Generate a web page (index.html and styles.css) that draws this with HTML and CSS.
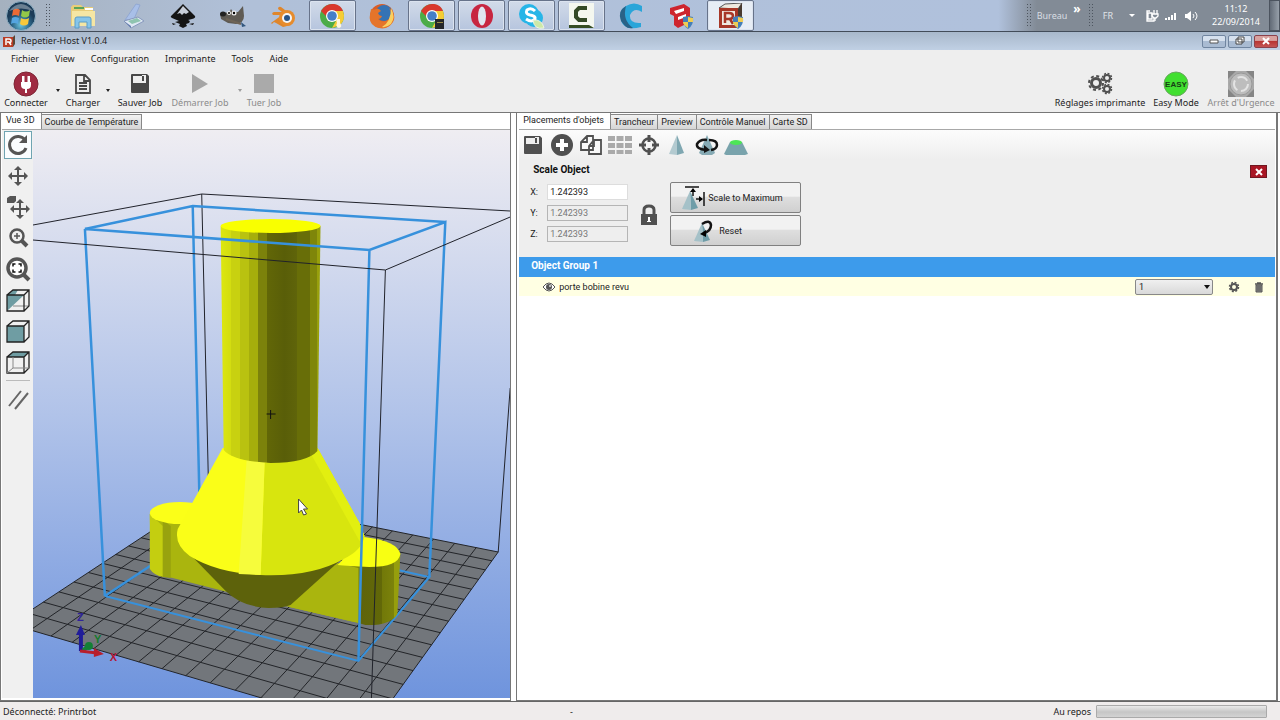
FILE: index.html
```html
<!DOCTYPE html>
<html lang="fr">
<head>
<meta charset="utf-8">
<title>Repetier-Host V1.0.4</title>
<link rel="stylesheet" href="styles.css">
</head>
<body>
<header class="taskbar">
  <button class="start" aria-label="Démarrer"><svg width="32" height="30" viewBox="0 0 32 30"><defs><radialGradient id="orb" cx=".5" cy=".8"><stop offset="0" stop-color="#6cc6e0"/><stop offset=".6" stop-color="#2d6688"/><stop offset="1" stop-color="#1c3c58"/></radialGradient></defs><circle cx="16" cy="15" r="14.500" fill="url(#orb)" stroke="#8fb0c4"/><path d="M8 9q4-2.500 7 0l-1 6q-4-2-7 0z" fill="#ea6a35"/><path d="M17 9q4 3 8 0l-1 6q-4 3-8 0z" fill="#93c848"/><path d="M7 17q3-2 7 0l-1 6q-4-2-7 0z" fill="#55a5e0"/><path d="M16 17q4 2.500 8 0l-1 6q-4 3-8 0z" fill="#f8c83a"/><path d="M4 10Q16-4 28 10 16 5 4 10" fill="#fff" opacity=".35"/></svg></button>
  <i class="grip"></i>
  <nav class="apps">
    <button class="app" aria-label="Explorateur"><svg viewBox="0 0 28 26"><path d="M2 4l2-2h8l2 2h10v19H2z" fill="#e8cd78"/><path d="M3 8h23v15H3z" fill="#f5e6a4"/><path d="M5 4h10v2H5z" fill="#5aa45c"/><path d="M16 5h8v2h-8z" fill="#fff"/><path d="M6 25V16q0-2 2-2h12q2 0 2 2v9h-4v-6h-8v6z" fill="#86c5ea" stroke="#5b9dc8"/></svg></button>
    <button class="app" aria-label="Scanner"><svg viewBox="0 0 28 26"><path d="M17 1l4 1-6 14-9 1z" fill="#a8bfe8" stroke="#92a8d2"/><path d="M5 18l14-4 6 4-13 7z" fill="#dfe8f4" stroke="#8799bd"/><path d="M9 18l9-3 4 3-9 3z" fill="#8fc4b0"/><path d="M5 18l7 7v-2l-7-5z" fill="#637bad"/></svg></button>
    <button class="app" aria-label="Inkscape"><svg viewBox="0 0 28 26"><path d="M14 1L26 13q1 2-3 3l-4 1q3 1 1 3l-3 1 1 2-4 2-4-2 1-2-5-2 4-1-7-3q-2-1-1-2z" fill="#151515"/><path d="M14 3l6 6-3 2-2-1-2 2-2-2-3 1z" fill="#c8ced8"/><path d="M20 21l5-1-1 2zM3 20l4 1-3 1z" fill="#151515"/></svg></button>
    <button class="app" aria-label="GIMP"><svg viewBox="0 0 28 26"><path d="M3 9l7 1 2-4 2 3h5l5-6 1 10q0 7-8 8l-8-1-7-4-1-5z" fill="#5f5b54"/><ellipse cx="4" cy="11" rx="3" ry="2.500" fill="#222"/><circle cx="10" cy="10" r="2" fill="#eee"/><circle cx="15" cy="10" r="2.500" fill="#eee"/><circle cx="10" cy="10" r="1"/><circle cx="15" cy="10" r="1.200"/><path d="M7 16l15 5" stroke="#6f6457" stroke-width="2"/><path d="M22 19l5 4-4 1z" fill="#32577f"/></svg></button>
    <button class="app" aria-label="Blender"><svg viewBox="0 0 28 26"><path d="M2 20l11-8H4q-2-2 1-3h8l-4-3q0-3 3-2l12 9-2 9-8 2-7-4-2-1-2 2z" fill="#df862b"/><circle cx="18" cy="15" r="8" fill="#e68c2d"/><circle cx="18" cy="15" r="5" fill="#f4f6f8"/><circle cx="18" cy="15" r="3" fill="#285486"/></svg></button>
    <button class="app open" aria-label="Chrome"><svg viewBox="0 0 28 26"><circle cx="14" cy="13" r="12" fill="#4cac48"/><path d="M3 8Q8 0 16 1q7 1 9 7H14L9 14z" fill="#d9382d"/><path d="M14 8h11q3 8-3 14l-8 3 5-9z" fill="#f6cc35"/><circle cx="14" cy="13" r="6" fill="#fff"/><circle cx="14" cy="13" r="4.800" fill="#467fc8"/><path d="M18 16h4v4q3 4-1 5-4-1-2-5z" fill="#fff7dc"/></svg></button>
    <button class="app" aria-label="Firefox"><svg viewBox="0 0 28 26"><circle cx="14" cy="13" r="12" fill="#d95d27"/><circle cx="16" cy="10" r="8" fill="#3473b5"/><path d="M3 6q3 1 5 0 3-1 5 2l-3 2q1 3 4 3-1 3-4 3 5 5 11 0 4-5 0-11 8 7 4 14-5 8-14 6Q0 22 2 12z" fill="#e5742a"/><path d="M23 5q5 9 0 16-5 4-9 3 9-5 9-19" fill="#fad060"/></svg></button>
    <button class="app open" aria-label="Chrome 2"><svg viewBox="0 0 28 26"><circle cx="14" cy="13" r="12" fill="#4cac48"/><path d="M3 8Q8 0 16 1q7 1 9 7H14L9 14z" fill="#d9382d"/><path d="M14 8h11q3 8-3 14l-8 3 5-9z" fill="#f6cc35"/><circle cx="14" cy="13" r="6" fill="#fff"/><circle cx="14" cy="13" r="4.800" fill="#467fc8"/><path d="M17 16h9v10h-9z" fill="#24272b"/><path d="M19 19h6v1h-6z" fill="#9b8b47"/></svg></button>
    <button class="app open" aria-label="Opera"><svg viewBox="0 0 28 26"><ellipse cx="14" cy="13" rx="11" ry="12" fill="#c72640"/><ellipse cx="14" cy="13" rx="4" ry="9.500" fill="#dfe6ef"/></svg></button>
    <button class="app open" aria-label="Skype"><svg viewBox="0 0 28 26"><circle cx="12" cy="11" r="10" fill="#27b5e7"/><circle cx="17" cy="15" r="9" fill="#27b5e7"/><path d="M18 8q-4-4-8-1-2 4 3 5 6 1 5 4-3 4-9 0" fill="none" stroke="#fff" stroke-width="3"/><path d="M16 17q9-1 11 8-10 2-11-8" fill="#cde9a8" stroke="#eef5e2"/></svg></button>
    <button class="app open" aria-label="Camtasia"><svg viewBox="0 0 28 26"><path d="M2 0h25v25H2z" fill="#f4f7ef"/><path d="M20 5h-8l-3 3v6l3 3h8" fill="none" stroke="#344a27" stroke-width="4"/><path d="M2 22h20l5 3H2z" fill="#354d22"/></svg></button>
    <button class="app" aria-label="Cura"><svg viewBox="0 0 28 26"><path d="M25 3v6q-8-5-12 3-1 9 11 8v4Q10 28 5 20 0 8 9 3q8-5 16 0" fill="#2aa5d9"/><path d="M9 3Q0 8 4 18l4 5q3 3 8 2Q5 17 9 3" fill="#2a6286"/></svg></button>
    <button class="app" aria-label="SketchUp"><svg viewBox="0 0 28 26"><path d="M3 5l14-4 6 4v14l-12 6-4-3V13L3 11z" fill="#ce252e"/><path d="M7 8l10-3v3L9 11zM11 14l8-3v3l-8 3z" fill="#fff"/><path d="M16 14l5-1 5 1q1 8-5 12-6-4-5-12" fill="#457fb8"/><path d="M21 14l5 1v4h-5v6q-5-3-5-6h5z" fill="#efcd54"/></svg></button>
    <button class="app open current" aria-label="Repetier-Host"><svg viewBox="0 0 28 26"><path d="M2 5l6-4 17-1-4 6z" fill="#eee9df" stroke="#555"/><path d="M2 5h19v20H2z" fill="#a73727"/><path d="M21 6l4-6v18l-4 7z" fill="#493b30"/><path d="M5 8h13v14H5z" fill="#efe9e0"/><path d="M8 20V10h4q4 0 4 3t-4 3H9m4 0l3 5" stroke="#a73727" stroke-width="2.500" fill="none"/><path d="M16 14l5-1 5 1q1 8-5 12-6-4-5-12" fill="#457fb8"/><path d="M21 14l5 1v4h-5v6q-5-3-5-6h5z" fill="#efcd54"/></svg></button>
  </nav>
  <div class="tray">
    <i class="grip"></i><span class="desk">Bureau</span><b class="chev">»</b><i class="grip"></i><span class="lang">FR</span><i class="down light"></i>
    <svg class="trayicons" width="54" height="14" viewBox="0 0 54 14"><g fill="none" stroke="#fff" stroke-width="1.300"><path d="M5 2H2v10h7V9M3 4h4v6H3z"/><path d="M9 1v4M12 1v4M7 5h6v2l-2 2H9L7 7zM10 9v3"/></g><path d="M20 11V9h2v2M23 11V8h2v3M26 11V6h2v5M29 11V4h2v7" fill="#fff"/><path d="M40 5h2l4-3v10l-4-3h-2z" fill="#fff"/><path d="M48 5q2 2 0 4M50 3q4 4 0 8" stroke="#fff" fill="none"/></svg>
    <time class="clock"><span>11:12</span><span>22/09/2014</span></time>
    <button class="showdesk" aria-label="Afficher le bureau"></button>
  </div>
</header>

<div class="titlebar">
  <svg width="14" height="12" viewBox="0 0 14 12"><path d="M1 2h10v10H1z" fill="#b93b25"/><path d="M11 2l2-2v9l-2 3z" fill="#5b4638"/><path d="M4 10V4h3q2 0 2 2T7 7H5m2 0l2 3" stroke="#fff" stroke-width="1.500" fill="none"/></svg>
  <h1>Repetier-Host V1.0.4</h1>
  <div class="winbtns">
    <button aria-label="Réduire"><svg width="12" height="8"><path d="M2 3h8v3H2z" fill="#fff" stroke="#555"/></svg></button>
    <button aria-label="Restaurer"><svg width="12" height="10"><path d="M4 1h6v5H4zM2 3h6v5H2z" fill="#fff" stroke="#444"/></svg></button>
    <button class="close" aria-label="Fermer"><svg width="12" height="8"><path d="M3 1l6 6M9 1L3 7" stroke="#fff" stroke-width="2"/></svg></button>
  </div>
</div>

<nav class="menubar"><button>Fichier</button><button>View</button><button>Configuration</button><button>Imprimante</button><button>Tools</button><button>Aide</button></nav>

<div class="toolbar">
  <button class="tool connect"><svg width="26" height="26" viewBox="0 0 26 26"><circle cx="13" cy="13" r="12" fill="#9f2b42" stroke="#7d2635"/><path d="M8 11h10v3q0 4-4 4v4h-2v-4q-4 0-4-4zM9 5h2.500v6H9zM14.500 5H17v6h-2.500z" fill="#fff"/></svg><span>Connecter</span></button>
  <button class="drop" aria-label="Options de connexion"><i class="down"></i></button>
  <button class="tool load"><svg width="20" height="26" viewBox="0 0 20 26"><path d="M3 4h9l5 5v13H3zM11 4v6h6M6 12h8M6 15h8M6 18h8" fill="none" stroke="#484848" stroke-width="1.800"/></svg><span>Charger</span></button>
  <button class="drop" aria-label="Options de chargement"><i class="down"></i></button>
  <button class="tool save"><svg width="22" height="26" viewBox="0 0 22 26"><path d="M2 4q0-1 1-1h15l2 2v16q0 1-1 1H3q-1 0-1-1z" fill="#484848"/><path d="M4 4h13v8H4z" fill="#eee"/><path d="M4 4h9v1H4zM13 5h2v5h-2z" fill="#484848"/></svg><span>Sauver Job</span></button>
  <button class="tool run" disabled><svg width="22" height="26" viewBox="0 0 22 26"><path d="M3 3l16 10L3 22z" fill="#a5a5a5"/></svg><span>Démarrer Job</span></button>
  <button class="drop" aria-label="Options de job" disabled><i class="down"></i></button>
  <button class="tool kill" disabled><svg width="22" height="26" viewBox="0 0 22 26"><path d="M1 3h20v19H1z" fill="#aaa"/></svg><span>Tuer Job</span></button>
  <button class="tool settings"><svg width="26" height="26" viewBox="0 0 26 26"><g fill="none" stroke="#505050"><circle cx="9" cy="12" r="4.500" stroke-width="3"/><circle cx="9" cy="12" r="7" stroke-width="2" stroke-dasharray="3 2.500"/><circle cx="20" cy="7" r="3" stroke-width="2"/><circle cx="20" cy="7" r="4.500" stroke-width="1.500" stroke-dasharray="2 1.530"/><circle cx="20" cy="18" r="3" stroke-width="2"/><circle cx="20" cy="18" r="4.500" stroke-width="1.500" stroke-dasharray="2 1.530"/></g></svg><span>Réglages imprimante</span></button>
  <button class="tool easy"><svg width="26" height="26" viewBox="0 0 26 26"><circle cx="13" cy="13" r="12" fill="#41df30" stroke="#6aa55f"/><text x="13" y="16" text-anchor="middle" class="easytext">EASY</text></svg><span>Easy Mode</span></button>
  <button class="tool stop" disabled><svg width="26" height="26" viewBox="0 0 26 26"><path d="M0 0h26v26H0z" fill="#aaa"/><path d="M0 0h8L0 8zM26 0v8l-8-8zM0 26v-8l8 8zM26 26h-8l8-8z" fill="#858585"/><circle cx="13" cy="13" r="11" fill="#bdbdbd" stroke="#999"/><circle cx="13" cy="13" r="7" fill="none" stroke="#e3e3e3" stroke-width="2" stroke-dasharray="11 3.660"/></svg><span>Arrêt d'Urgence</span></button>
</div>

<main class="work">
  <section class="left">
    <div class="tabs" role="tablist"><button class="tab active" role="tab">Vue 3D</button><button class="tab" role="tab">Courbe de Température</button></div>
    <div class="view">
      <div class="sidetools">
        <button class="side on" aria-label="Rotation"><svg viewBox="0 0 26 26"><path d="M20 8a8.500 8.500 0 1 0 1 8" fill="none" stroke="#555" stroke-width="3"/><path d="M22 3v8h-8z" fill="#555"/></svg></button>
        <button class="side" aria-label="Déplacer"><svg viewBox="0 0 26 26"><path d="M13 5v16M5 13h16" stroke="#555" stroke-width="2"/><path d="M13 3l4 4H9zM13 23l4-4H9zM3 13l4-4v8zM23 13l-4-4v8z" fill="#555"/></svg></button>
        <button class="side" aria-label="Déplacer l'objet"><svg viewBox="0 0 26 26"><path d="M2 4l3-2h6v5l-2 2H2z" fill="#555"/><path d="M15 8v14M7 15h16" stroke="#555" stroke-width="2"/><path d="M15 5l4 4h-8zM15 25l4-4h-8zM5 15l4-4v8zM25 15l-4-4v8z" fill="#555"/></svg></button>
        <button class="side" aria-label="Zoom"><svg viewBox="0 0 26 26"><circle cx="12" cy="11" r="6.500" fill="none" stroke="#555" stroke-width="2.500"/><path d="M17 16l5 5" stroke="#555" stroke-width="4"/><path d="M12 8v6M9 11h6" stroke="#555" stroke-width="1.500"/></svg></button>
        <button class="side" aria-label="Ajuster"><svg viewBox="0 0 26 26"><circle cx="12" cy="12" r="9" fill="#fff" stroke="#555" stroke-width="3.500"/><path d="M19 19l5 5" stroke="#555" stroke-width="4"/><path d="M8 10.500V8h2.500M13.500 8H16v2.500M16 13.500V16h-2.500M10.500 16H8v-2.500" fill="none" stroke="#111" stroke-width="1.500"/></svg></button>
        <button class="side" aria-label="Isométrique"><svg viewBox="0 0 26 26"><path d="M2 8h17L2 24z" fill="#6f9da3"/><path d="M8 3h5l-3 5H2z" fill="#6f9da3"/><path d="M8 19h16" stroke="#888"/><path d="M2 8h17v16H2zM2 8l6-5h16v16l-5 5M19 8l5-5" fill="none" stroke="#222" stroke-width="1.300"/></svg></button>
        <button class="side" aria-label="Vue de face"><svg viewBox="0 0 26 26"><path d="M2 8h17v16H2z" fill="#6f9da3"/><path d="M2 8h17v16H2zM2 8l6-5h16v16l-5 5M19 8l5-5" fill="none" stroke="#222" stroke-width="1.300"/></svg></button>
        <button class="side" aria-label="Vue de dessus"><svg viewBox="0 0 26 26"><path d="M2 8l6-5h16l-5 5z" fill="#6f9da3"/><path d="M2 8h17v16H2zM2 8l6-5h16v16l-5 5M19 8l5-5" fill="none" stroke="#222" stroke-width="1.300"/><path d="M8 8v11l-6 5M8 19h16" fill="none" stroke="#888"/></svg></button>
        <hr>
        <button class="side" aria-label="Projection parallèle"><svg viewBox="0 0 26 26"><path d="M4 20L16 5M10 23L23 7" stroke="#666" stroke-width="2"/></svg></button>
      </div>
      <svg class="scene" viewBox="33 130 478 568" preserveAspectRatio="none" role="img" aria-label="Porte bobine sur le plateau">
        <defs>
          <linearGradient id="sky" x1="0" y1="0" x2="0" y2="1"><stop offset="0" stop-color="#efedf2"/><stop offset=".5" stop-color="#b1c3e9"/><stop offset="1" stop-color="#6f94dd"/></linearGradient>
          <linearGradient id="tube" gradientUnits="userSpaceOnUse" x1="221" y1="0" x2="321" y2="0">
            <stop offset="0" stop-color="#dde710"/><stop offset=".1" stop-color="#d3dd10"/><stop offset=".1" stop-color="#c8d110"/><stop offset=".19" stop-color="#c8d110"/><stop offset=".19" stop-color="#b9c210"/><stop offset=".28" stop-color="#b9c210"/><stop offset=".28" stop-color="#a6ae0c"/><stop offset=".37" stop-color="#a6ae0c"/><stop offset=".37" stop-color="#7c820b"/><stop offset=".46" stop-color="#7c820b"/><stop offset=".46" stop-color="#626707"/><stop offset=".64" stop-color="#595e08"/><stop offset=".76" stop-color="#5f640a"/><stop offset=".76" stop-color="#686e08"/><stop offset=".89" stop-color="#686e08"/><stop offset=".89" stop-color="#7f860a"/><stop offset=".96" stop-color="#7f860a"/><stop offset=".96" stop-color="#98a00c"/></linearGradient>
          <linearGradient id="foot" gradientUnits="userSpaceOnUse" x1="356" y1="0" x2="401" y2="0"><stop offset="0" stop-color="#7e850a"/><stop offset=".12" stop-color="#7e850a"/><stop offset=".12" stop-color="#5f640a"/><stop offset=".6" stop-color="#626808"/><stop offset=".6" stop-color="#727909"/><stop offset=".85" stop-color="#7b820b"/><stop offset=".85" stop-color="#969e0c"/></linearGradient>
        </defs>
        <rect x="33" y="130" width="478" height="568" fill="url(#sky)"/>
        <path d="M208 494L499 552 371 730 10 624z" fill="#72767b"/>
        <path id="grid" stroke="#222428" stroke-width="1" fill="none"/>
        <path d="M33 225L202 194 511 211M202 194l7 300M499 552L511 388" class="frame"/>
        <path d="M85 229L193 206 446 222M193 206L200 510M105 596L200 533" class="box"/>
        <path d="M105 596L359 661 430 577 385 567" class="box low"/>
        <path d="M150 514L151 569Q155 576 169 577L224 591 290 607 355 622V570L200 530z" fill="#aab50e"/>
        <path d="M150 514v55q4 6 13 8v-51z" fill="#c4ce10"/><path d="M163 520v57l8 1v-52z" fill="#98a20e"/>
        <ellipse cx="180" cy="513" rx="30" ry="11" fill="#fbff18"/>
        <path d="M352 553H401L398 614Q391 626 366 625L352 621z" fill="url(#foot)"/>
        <path d="M290 607L338 563 359 568 359 623z" fill="#aab50e"/>
        <path d="M338 565L365 537Q398 541 401 554 399 567 370 567 348 566 338 565" fill="#f8ff12"/>
        <path d="M188 552L226 591Q242 607 269 608 284 608 291 605L340 561z" fill="#5d620b"/>
        <path d="M223 448L178 529Q174 544 190 556 219 574 266 575 311 575 344 559 363 550 365 536L360 523 318 448z" fill="#fafe18"/>
        <path d="M265 463L261 575Q313 577 344 559 363 550 365 536L360 523 318 448z" fill="#d8e50e"/>
        <path d="M247 460L239 574 261 575 265 462z" fill="#f6fc3c"/><path d="M318 448L360 523 365 536 360 541 312 455z" fill="#e2ef10"/>
        <path d="M221 226H321L318 451Q307 463 271 463 233 461 224 450z" fill="url(#tube)"/>
        <ellipse cx="271" cy="226" rx="50" ry="7" fill="#f9ff00"/>
        <path d="M85 229L105 596M85 229L370 250 446 222 430 577M370 250L359 661" class="box"/>
        <path d="M33 240L386 270 511 217M386 270L372 698" class="frame"/>
        <path d="M267 414h9M271 410v9" stroke="#111"/>
        <path d="M299 499v14l3-3 2 5 3-1-3-5h4z" fill="#fff" stroke="#444"/>
        <path d="M81 651v-20" stroke="#201c99" stroke-width="4"/><path d="M81 625l-5 10h9z" fill="#201c99"/>
        <path d="M83 650l7-4" stroke="#17803a" stroke-width="4"/><ellipse cx="89" cy="646" rx="4" ry="4" fill="#138035"/>
        <path d="M80 651l17 2" stroke="#b81f2c" stroke-width="3"/><path d="M94 648l10 6-10 3z" fill="#b81f2c"/>
        <g class="axis"><text x="77" y="621" fill="#302499">Z</text><text x="94" y="643" fill="#167a2d">Y</text><text x="110" y="661" fill="#b41634">X</text></g>
      </svg>
    </div>
  </section>

  <section class="right">
    <div class="tabs" role="tablist"><button class="tab active" role="tab">Placements d'objets</button><button class="tab" role="tab">Trancheur</button><button class="tab" role="tab">Preview</button><button class="tab" role="tab">Contrôle Manuel</button><button class="tab" role="tab">Carte SD</button></div>
    <div class="objtools">
      <button aria-label="Enregistrer"><svg viewBox="0 0 24 24"><path d="M3 4q0-1 1-1h15l2 2v15q0 1-1 1H4q-1 0-1-1z" fill="#505050"/><path d="M5 4h13v7H5z" fill="#eee"/><path d="M5 4h9v1H5zM14 5h2v5h-2z" fill="#505050"/></svg></button>
      <button aria-label="Ajouter"><svg viewBox="0 0 24 24"><circle cx="12" cy="12" r="11" fill="#505050"/><path d="M12 6v12M6 12h12" stroke="#fff" stroke-width="4"/></svg></button>
      <button aria-label="Copier"><svg viewBox="0 0 24 24"><path d="M8 3h6v14H2V9zM8 3v6H2M15 7h7v14H10v-8zM15 7v6h-5" fill="#f8f8f8" stroke="#505050" stroke-width="1.800"/></svg></button>
      <button aria-label="Disposer"><svg viewBox="0 0 24 24"><path d="M0 3h7v5H0zM8.500 3h7v5h-7zM17 3h7v5h-7zM0 10h7v5H0zM8.500 10h7v5h-7zM17 10h7v5h-7zM0 17h7v4H0zM8.500 17h7v4h-7zM17 17h7v4h-7z" fill="#aaa"/></svg></button>
      <button aria-label="Centrer"><svg viewBox="0 0 24 24"><circle cx="12" cy="12" r="6.500" fill="none" stroke="#505050" stroke-width="2.500"/><path d="M12 2v7M12 15v7M2 12h7M15 12h7" stroke="#505050" stroke-width="3"/></svg></button>
      <button aria-label="Échelle"><svg viewBox="0 0 24 24"><path d="M11 2l7 18-7 2z" fill="#7fa7b1"/><path d="M11 2L3 21l8 1z" fill="#b3cad0"/></svg></button>
      <button aria-label="Rotation de l'objet"><svg viewBox="0 0 24 24"><path d="M12 2l8 18-3 2H7l-3-2z" fill="#86aab4"/><path d="M11 17Q1 16 2 11q3-5 10-4M14 7q8 0 8 5 0 4-6 5" fill="none" stroke="#151515" stroke-width="2.500"/><path d="M9 12l6 5-6 3z" fill="#151515"/></svg></button>
      <button aria-label="Couper"><svg viewBox="0 0 24 24"><path d="M6 9h12l6 12-3 1H2l-2-1z" fill="#79a3ac"/><ellipse cx="12" cy="9.500" rx="6" ry="2.500" fill="#4de557"/></svg></button>
    </div>
    <form class="scale">
      <div class="fields">
        <h2>Scale Object</h2>
        <div class="field"><label for="sx">X:</label><input id="sx" value="1.242393"></div>
        <div class="field"><label for="sy">Y:</label><input id="sy" value="1.242393" disabled></div>
        <div class="field"><label for="sz">Z:</label><input id="sz" value="1.242393" disabled></div>
      </div>
      <button type="button" class="lock" aria-label="Verrouiller"><svg width="18" height="22" viewBox="0 0 18 22"><path d="M4 11V6q0-4 5-4t5 4v5" fill="none" stroke="#505050" stroke-width="3"/><path d="M1 10h16v11H1z" fill="#505050"/><path d="M8 13h2v5H8zM7 17h4v1H7z" fill="#fff"/></svg></button>
      <div class="actions">
        <button type="button" class="push"><svg width="26" height="26" viewBox="0 0 26 26"><path d="M10 6l8 17-7 2z" fill="#6f9da8"/><path d="M10 6L2 24l9 1z" fill="#a5c1c8"/><path d="M5 2h14M13 4v7M16 14h6M24 7v14" stroke="#151515" stroke-width="1.500"/><path d="M13 3l3 4h-6zM23 14l-4-3v6z"/></svg>Scale to Maximum</button>
        <button type="button" class="push reset"><svg width="24" height="26" viewBox="0 0 24 26"><path d="M11 5l8 17-7 2z" fill="#6f9da8"/><path d="M11 5L3 23l9 1z" fill="#a5c1c8"/><path d="M11 6q8-5 9 1 0 6-7 8" fill="none" stroke="#151515" stroke-width="2.500"/><path d="M9 16l6-4v7z"/></svg>Reset</button>
      </div>
      <button type="button" class="x" aria-label="Fermer le panneau"><svg width="10" height="8"><path d="M2 1l6 6M8 1L2 7" stroke="#fff" stroke-width="2"/></svg></button>
    </form>
    <h3 class="group">Object Group 1</h3>
    <div class="object">
      <svg width="12" height="10" viewBox="0 0 12 10"><path d="M0 5q6-8 12 0-6 8-12 0" fill="#fff" stroke="#555"/><circle cx="6" cy="5" r="3" fill="#555"/><circle cx="7" cy="4" r="1" fill="#ddd"/></svg>
      <label for="ext" class="name">porte bobine revu</label>
      <span class="pick"><select id="ext"><option>1</option></select></span>
      <button aria-label="Réglages de l'objet"><svg width="12" height="12" viewBox="0 0 12 12"><circle cx="6" cy="6" r="3" fill="none" stroke="#555" stroke-width="2"/><circle cx="6" cy="6" r="4.500" fill="none" stroke="#555" stroke-width="1.500" stroke-dasharray="2 1.530"/></svg></button>
      <button aria-label="Supprimer"><svg width="12" height="12" viewBox="0 0 12 12"><path d="M2 3h8M4 2h4" stroke="#555" stroke-width="1.500"/><path d="M3 4h6v7H3z" fill="#888" stroke="#555"/><path d="M5 5v5M7 5v5" stroke="#555"/></svg></button>
    </div>
  </section>
</main>
<footer class="status"><span>Déconnecté: Printrbot</span><span>-</span><span class="idle">Au repos <i class="bar"></i></span></footer>
<script src="bed.js"></script>
</body>
</html>
```
FILE: styles.css
```css
* { box-sizing: border-box; }
body { margin: 0; height: 100vh; display: flex; flex-direction: column; background: #eee; color: #222; font: 10px/12px "Noto Sans", "Open Sans", sans-serif; overflow: hidden; }
button { margin: 0; padding: 0; border: 0; background: none; font: inherit; color: inherit; }
svg { display: block; flex: none; }
h1, h2, h3 { margin: 0; font: inherit; }

.taskbar { flex: 0 0 32px; display: flex; align-items: center; background: linear-gradient(90deg, #a5b1bf 0, #b0c0d8 240px, #b0c1dc 78%, #828b96 81%, #828b96); border-bottom: 1px solid #424c59; }
.start { margin-left: 5px; width: 40px; }
.grip { flex: none; width: 7px; height: 25px; background: radial-gradient(circle, #4d555f 1px, transparent 1px) 0 0 / 3px 3px; }
.apps { margin-left: 8px; width: 694px; height: 31px; display: grid; grid-template-columns: repeat(14, 1fr); gap: 3px; }
.app { display: flex; align-items: center; justify-content: center; border-radius: 2px; }
.app svg { width: 28px; height: 26px; }
.open { border: 1px solid #67738a; background: linear-gradient(#d2dbe9, #b6c5de); box-shadow: inset 0 0 0 1px #dbe3ef; }
.current { background: #e7edf5; }
.tray { margin-left: auto; height: 31px; display: flex; align-items: center; color: #fff; }
.desk { margin: 0 6px 0 4px; font-size: 9px; color: #d8dde3; }
.chev { align-self: flex-start; margin-right: 7px; font-size: 12px; line-height: 17px; }
.lang { margin: 0 20px 0 8px; font-size: 9px; color: #e0e4e8; }
.down { width: 0; height: 0; border: 2px solid transparent; border-top: 3px solid #222; border-bottom: 0; }
.light { margin-left: -4px; border-width: 3px 3px 0; border-top-color: #fff; }
.trayicons { margin: 0 12px 0 10px; }
.clock { display: flex; flex-direction: column; align-items: center; gap: 1px; width: 50px; font-size: 9px; }
.showdesk { margin-left: 8px; width: 11px; height: 31px; border: 1px solid #4c545f; background: linear-gradient(90deg, #626b77, #969fa9); }

.titlebar { flex: 0 0 18px; display: flex; align-items: center; padding-left: 2px; background: linear-gradient(#a8b8cb, #c0d0e4); }
.titlebar h1 { margin-left: 5px; font-size: 9px; }
.winbtns { margin-left: auto; padding-right: 2px; display: flex; gap: 2px; }
.winbtns button { width: 24px; height: 13px; display: flex; align-items: center; justify-content: center; border: 1px solid #7085a0; border-radius: 2px; background: linear-gradient(#d5e0ee 45%, #a9bbd2 50%); }
.winbtns .close { border-color: #8b424c; background: linear-gradient(#d8a19f 40%, #b83633 50%, #c45554); }

.menubar { flex: 0 0 18px; display: flex; gap: 16px; padding-left: 11px; }
.menubar button { font-size: 9px; }

.toolbar { flex: 0 0 45px; display: flex; align-items: flex-start; padding: 3px 6px 0 0; border-bottom: 1px solid #777; }
.tool { height: 38px; display: flex; flex-direction: column; align-items: center; white-space: nowrap; font-size: 9px; }
.tool:disabled, .drop:disabled { color: #8b8b8b; }
.drop { width: 12px; height: 38px; display: flex; align-items: center; justify-content: center; }
.drop:disabled { opacity: .4; }
.connect { width: 52px; }
.load { width: 38px; }
.save { width: 52px; }
.run { width: 68px; }
.kill { width: 36px; }
.settings { margin-left: auto; width: 90px; }
.easy { margin: 0 9px 0 8px; width: 46px; }
.stop { width: 66px; }
.easytext { font: bold 8px "Liberation Sans", Arial, sans-serif; fill: #173d15; }

.work { flex: 1; min-height: 0; display: flex; gap: 5px; padding-right: 2px; background: #fff; font-family: Roboto, "Liberation Sans", sans-serif; font-size: 9px; }
.left, .right { display: flex; flex-direction: column; min-width: 0; border: 1px solid #777; border-top: 0; }
.left { flex: 0 0 40%; padding: 0 0 2px 1px; }
.right { flex: 1; padding: 0 1px 0 2px; border-width: 0 2px 1px 1px; }
.tabs { flex: 0 0 17px; display: flex; align-items: flex-end; border-bottom: 1px solid #a8a8a8; }
.tab { height: 15px; padding: 0 3px; border: 1px solid #888; border-bottom: 0; border-left-width: 0; background: linear-gradient(#f2f2f2, #d5d5d5); white-space: nowrap; }
.tab.active { height: 16px; padding: 0 6px 2px 4px; border-color: #888; border-top: 0; background: #fff; }
.view { flex: 1; min-height: 0; display: flex; }
.sidetools { flex: 0 0 31px; display: flex; flex-direction: column; align-items: center; gap: 3px; padding-top: 1px; background: #f0f0f0; }
.side { width: 28px; height: 28px; border: 1px solid transparent; }
.side svg { width: 26px; height: 26px; }
.side.on { border-color: #6fa4b2; background: #fafdff; }
.sidetools hr { width: 24px; margin: 1px 0; border: 0; border-top: 1px solid #bbb; }
.scene { flex: 1; min-width: 0; height: 100%; }
.frame { fill: none; stroke: #20222a; stroke-width: 1; }
.box { fill: none; stroke: #3791dc; stroke-width: 2.5; }
.low { stroke-width: 2; }
.axis { font: bold 11px "Liberation Sans", Arial, sans-serif; }

.objtools { flex: 0 0 30px; display: flex; align-items: center; gap: 5px; padding-left: 2px; background: linear-gradient(#fcfcfc, #eee); }
.objtools button { width: 24px; height: 24px; }
.objtools svg { width: 24px; height: 24px; }
.scale { flex: 0 0 97px; display: flex; align-items: flex-start; padding: 4px 8px 0 11px; background: #eee; }
.fields { width: 98px; display: flex; flex-direction: column; gap: 5px; }
.scale h2 { margin: 0 0 3px 3px; font-size: 10px; font-weight: bold; color: #111; }
.field { display: flex; align-items: center; }
.field label { width: 17px; }
.field input { flex: 1; min-width: 0; height: 16px; padding: 0 2px; border: 1px solid #ddd; background: #fff; color: #222; font: inherit; }
.field input:disabled { border-color: #b5b5b5; background: #eee; color: #777; }
.lock { margin: 40px 0 0 12px; }
.actions { margin: 18px 0 0 12px; width: 131px; display: flex; flex-direction: column; gap: 2px; }
.push { height: 31px; display: flex; align-items: center; gap: 2px; padding-left: 9px; border: 1px solid #808080; border-radius: 2px; background: linear-gradient(#f2f2f2 45%, #dedede 50%, #d0d0d0); white-space: nowrap; }
.reset { padding-left: 20px; gap: 4px; }
.x { margin: 1px 0 0 auto; width: 17px; height: 13px; display: flex; align-items: center; justify-content: center; border: 1px solid #701720; background: #a91624; }
.group { flex: 0 0 20px; padding: 3px 12px; background: #3d9beb; color: #fff; font-size: 10px; font-weight: bold; }
.object { flex: 0 0 19px; display: flex; align-items: center; padding: 0 10px 0 24px; background: #ffffe3; }
.name { margin-left: 4px; }
.pick { position: relative; margin: 0 15px 0 auto; width: 78px; height: 16px; }
.pick::after { content: ""; position: absolute; right: 3px; top: 6px; border: 3px solid transparent; border-top: 4px solid #111; border-bottom: 0; pointer-events: none; }
.pick select { display: block; width: 100%; height: 100%; padding: 0 3px; appearance: none; border: 1px solid #888; border-radius: 2px; background: linear-gradient(#f0f0f0, #d9d9d9); font: inherit; color: #222; }
.object button + button { margin-left: 13px; }
.tabs { flex-basis: 16px; }

.status { flex: 0 0 19px; display: grid; grid-template-columns: 567px auto 1fr; align-items: center; padding: 1px 13px 0 3px; border-top: 1px solid #666; background: #efecec; font-size: 9px; }
.idle { display: flex; align-items: center; justify-content: flex-end; gap: 5px; }
.bar { width: 171px; height: 13px; border: 1px solid #aaa; border-radius: 1px; background: linear-gradient(#e9e9e9, #c6c6c6 55%, #d3d3d3); }
```
FILE: bed.js
```js
// Perspective grid of the print bed: back, right, front and left corners.
const corners = [[208, 494], [499, 552], [371, 730], [10, 624]];
const cells = 15;
const [[x0, y0], [x1, y1], [x2, y2], [x3, y3]] = corners;
const dx1 = x1 - x2, dx2 = x3 - x2, sx = x0 - x1 + x2 - x3;
const dy1 = y1 - y2, dy2 = y3 - y2, sy = y0 - y1 + y2 - y3;
const det = dx1 * dy2 - dx2 * dy1;
const g = (sx * dy2 - dx2 * sy) / det;
const h = (dx1 * sy - sx * dy1) / det;

function project(u, v) {
  const w = g * u + h * v + 1;
  const x = ((x1 - x0 + g * x1) * u + (x3 - x0 + h * x3) * v + x0) / w;
  const y = ((y1 - y0 + g * y1) * u + (y3 - y0 + h * y3) * v + y0) / w;
  return x.toFixed(1) + " " + y.toFixed(1);
}

let d = "";
for (let i = 0; i <= cells; i++) {
  const t = i / cells;
  d += `M${project(t, 0)}L${project(t, 1)}M${project(0, t)}L${project(1, t)}`;
}
document.getElementById("grid").setAttribute("d", d);
```
